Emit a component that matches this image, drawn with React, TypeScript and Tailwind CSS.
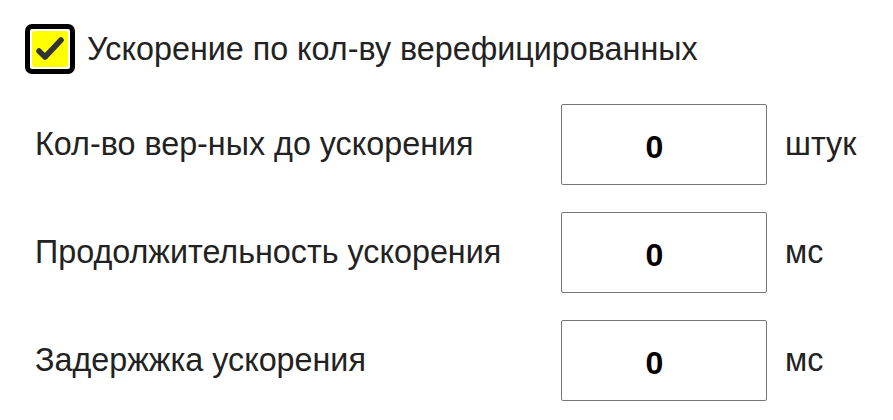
import React from "react";

const rows = [
  { label: "Кол-во вер-ных до ускорения", unit: "штук" },
  { label: "Продолжительность ускорения", unit: "мс" },
  { label: "Задержжка ускорения", unit: "мс" },
];

export default function App() {
  return (
    <div
      className="w-[893px] h-[420px] bg-white text-[#222] overflow-hidden"
      style={{ fontFamily: '"Liberation Sans", Arial, sans-serif' }}
    >
      <div className="flex items-center pl-[25px] pt-[24px]">
        <div className="w-[50px] h-[50px] border-[5px] border-black rounded-[7px] bg-white p-[2px] shrink-0">
          <div className="w-full h-full bg-[#ffff00] rounded-[3px] flex items-center justify-center">
            <svg width="36" height="36" viewBox="0 0 36 36">
              <path
                d="M7 20 L13 26 L29 9"
                fill="none"
                stroke="#333"
                strokeWidth="5.5"
                strokeLinecap="round"
                strokeLinejoin="round"
              />
            </svg>
          </div>
        </div>
        <span className="ml-[12px] text-[32.3px] leading-none">
          Ускорение по кол-ву верефицированных
        </span>
      </div>
      <div className="flex flex-col gap-[27px] pl-[35px] mt-[30px]">
        {rows.map((r) => (
          <div key={r.label} className="flex items-center">
            <div className="w-[526px] text-[32.3px] leading-none">{r.label}</div>
            <div className="w-[206px] h-[81px] border border-[#767676] rounded-[2px] flex items-center justify-center pr-[19px] pt-[4px] text-[32px] font-bold text-black">
              0
            </div>
            <div className="ml-[18px] text-[32.3px] leading-none">{r.unit}</div>
          </div>
        ))}
      </div>
    </div>
  );
}
